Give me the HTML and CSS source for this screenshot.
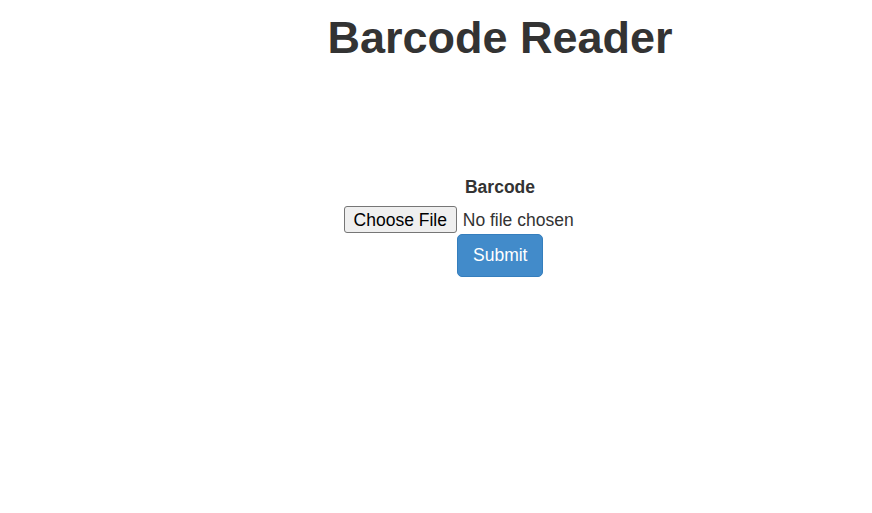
FILE: index.html
```html
<!DOCTYPE html>
<html lang="en">
<head>
<meta charset="utf-8">
<title>Barcode Reader</title>
<link rel="stylesheet" href="styles.css">
</head>
<body>
<div class="page">
  <h1 class="title">Barcode Reader</h1>
  <form class="form">
    <div class="group">
      <label class="label" for="file">Barcode</label>
      <input class="file" id="file" type="file">
    </div>
    <button class="btn" type="button">Submit</button>
  </form>
</div>
</body>
</html>
```
FILE: styles.css
```css
html, body {
  margin: 0;
  padding: 0;
  background: #fff;
}
body {
  font-family: "Liberation Sans", Arial, Helvetica, sans-serif;
  font-size: 17.5px;
  line-height: 1.42857;
  color: #333;
}
.page {
  padding-left: 128px;
  display: flex;
  flex-direction: column;
  align-items: center;
}
.title {
  margin: 12.5px 0 0;
  font-size: 45px;
  line-height: 1.1;
  font-weight: bold;
  color: #333;
}
.form {
  margin-top: 113px;
  width: 312.5px;
  display: flex;
  flex-direction: column;
  align-items: center;
}
.group {
  width: 100%;
  display: flex;
  flex-direction: column;
  align-items: center;
}
.label {
  font-weight: bold;
  margin-bottom: 6px;
  line-height: 25px;
}
.file {
  align-self: stretch;
  display: block;
  font-family: "Liberation Sans", Arial, sans-serif;
  font-size: 17.5px;
  line-height: 25px;
  height: 28px;
  color: #333;
  margin: 0;
  padding: 0;
}
.file::file-selector-button {
  font-family: "Liberation Sans", Arial, sans-serif;
  font-size: 17.5px;
  color: #000;
  height: 27px;
  width: 113px;
  padding: 2px 8px 0;
  margin: 0 6px 0 0;
  border: 1px solid #767676;
  border-radius: 3px;
  background: #efefef;
}
.btn {
  font-family: "Liberation Sans", Arial, sans-serif;
  font-size: 17.5px;
  line-height: 25px;
  padding: 7.5px 15px;
  height: 43px;
  width: 86px;
  color: #fff;
  background: #428bca;
  border: 1.25px solid #357ebd;
  border-radius: 5px;
  margin: 0;
}
```
